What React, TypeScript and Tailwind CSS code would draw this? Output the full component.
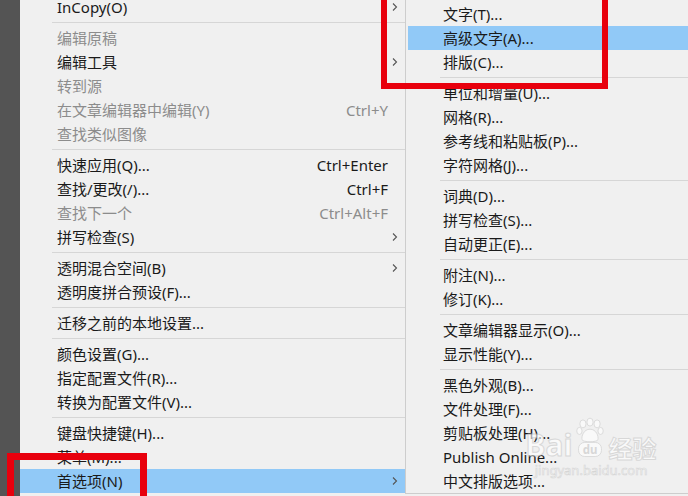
import React from "react";

type Item = { t: string; dis?: boolean; sub?: boolean; sc?: string; hl?: boolean };

const mainSections: Item[][] = [
  [{ t: "InCopy(O)", sub: true }],
  [
    { t: "编辑原稿", dis: true },
    { t: "编辑工具", sub: true },
    { t: "转到源", dis: true },
    { t: "在文章编辑器中编辑(Y)", dis: true, sc: "Ctrl+Y" },
    { t: "查找类似图像", dis: true },
  ],
  [
    { t: "快速应用(Q)...", sc: "Ctrl+Enter" },
    { t: "查找/更改(/)...", sc: "Ctrl+F" },
    { t: "查找下一个", dis: true, sc: "Ctrl+Alt+F" },
    { t: "拼写检查(S)", sub: true },
  ],
  [{ t: "透明混合空间(B)", sub: true }, { t: "透明度拼合预设(F)..." }],
  [{ t: "迁移之前的本地设置..." }],
  [{ t: "颜色设置(G)..." }, { t: "指定配置文件(R)..." }, { t: "转换为配置文件(V)..." }],
  [{ t: "键盘快捷键(H)..." }, { t: "菜单(M)..." }, { t: "首选项(N)", sub: true, hl: true }],
];

const subSections: Item[][] = [
  [{ t: "文字(T)..." }, { t: "高级文字(A)...", hl: true }, { t: "排版(C)..." }],
  [{ t: "单位和增量(U)..." }, { t: "网格(R)..." }, { t: "参考线和粘贴板(P)..." }, { t: "字符网格(J)..." }],
  [{ t: "词典(D)..." }, { t: "拼写检查(S)..." }, { t: "自动更正(E)..." }],
  [{ t: "附注(N)..." }, { t: "修订(K)..." }],
  [{ t: "文章编辑器显示(O)..." }, { t: "显示性能(Y)..." }],
  [
    { t: "黑色外观(B)..." },
    { t: "文件处理(F)..." },
    { t: "剪贴板处理(H)..." },
    { t: "Publish Online..." },
    { t: "中文排版选项..." },
  ],
];

function Chevron() {
  return (
    <svg width="6" height="10" viewBox="0 0 6 10" className="shrink-0">
      <polyline points="1,1.5 4.5,5 1,8.5" fill="none" stroke="#555" strokeWidth="1.1" />
    </svg>
  );
}

function Sep() {
  return (
    <div className="h-[7px] flex items-center pl-[32px]">
      <div className="h-px w-full bg-[#d6d6d6]" />
    </div>
  );
}

function MainRow({ it }: { it: Item }) {
  const color = it.dis ? "text-[#8c8c8c]" : "text-[#1a1a1a]";
  return (
    <div
      className={`h-[24px] flex items-center pl-[37px] pr-[7px] ${it.hl ? "bg-[#91c9f7]" : ""} ${color}`}
    >
      <span className="flex-1 whitespace-nowrap leading-[24px]">{it.t}</span>
      {it.sc && <span className="whitespace-nowrap leading-[24px] mr-[10px]">{it.sc}</span>}
      {it.sub && <Chevron />}
    </div>
  );
}

function SubRow({ it }: { it: Item }) {
  return (
    <div className={`h-[24px] flex items-center pl-[35px] text-[#1a1a1a] ${it.hl ? "bg-[#91c9f7]" : ""}`}>
      <span className="whitespace-nowrap leading-[24px]">{it.t}</span>
    </div>
  );
}

export default function App() {
  return (
    <div
      className="relative w-[688px] h-[496px] overflow-hidden flex bg-[#f0f0f0] text-[15px]"
      style={{ fontFamily: '"Noto Sans", "Noto Sans CJK SC", sans-serif' }}
    >
      <div className="w-[20px] shrink-0 bg-[#545454]" />
      <div className="w-[385px] shrink-0 bg-[#f0f0f0]">
        <div className="mt-[-5px]">
          {mainSections.map((sec, i) => (
            <React.Fragment key={i}>
              {i > 0 && <Sep />}
              {sec.map((it, j) => (
                <MainRow key={j} it={it} />
              ))}
            </React.Fragment>
          ))}
        </div>
      </div>
      <div className="flex-1 flex flex-col">
        <div className="h-[494px] bg-[#f0f0f0] border-l border-b border-[#cdcdcd] pl-[2px] pt-[2px]">
          {subSections.map((sec, i) => (
            <React.Fragment key={i}>
              {i > 0 && <Sep />}
              {sec.map((it, j) => (
                <SubRow key={j} it={it} />
              ))}
            </React.Fragment>
          ))}
        </div>
      </div>

      {/* Baidu watermark */}
      <div className="absolute left-[530px] top-[416px] w-[122px] flex flex-col items-center pointer-events-none opacity-60 whitespace-nowrap">
        <div className="flex items-end gap-[3px]">
          <span className="text-[30px] font-bold leading-none text-white [-webkit-text-stroke:1px_#c8c8c8]">Bai</span>
          <svg width="30" height="44" viewBox="0 0 34 44" className="shrink-0">
            <g fill="#fff" stroke="#c8c8c8" strokeWidth="1">
              <ellipse cx="9" cy="6" rx="3.5" ry="4.5" />
              <ellipse cx="17" cy="4" rx="3.5" ry="4.5" />
              <ellipse cx="25" cy="6" rx="3.5" ry="4.5" />
              <ellipse cx="5" cy="14" rx="3" ry="4" />
              <ellipse cx="29" cy="14" rx="3" ry="4" />
              <path d="M17 12 C10 12 7 20 8 24 C9 27 25 27 26 24 C27 20 24 12 17 12 Z" />
              <rect x="4" y="27" width="26" height="16" rx="7" />
            </g>
            <text x="17" y="40" textAnchor="middle" fontSize="13" fontWeight="bold" fill="#c8c8c8" fontFamily="Noto Sans, sans-serif">du</text>
          </svg>
          <span className="text-[24px] font-bold leading-none text-white whitespace-nowrap [-webkit-text-stroke:1px_#c8c8c8]" style={{ fontFamily: '"Noto Sans CJK SC", sans-serif' }}>经验</span>
        </div>
        <span className="text-[13px] leading-none mt-[4px] text-white [-webkit-text-stroke:0.6px_#c4c4c4]">jingyan.baidu.com</span>
      </div>

      {/* Red annotation boxes */}
      <div className="absolute left-[381px] top-[-10px] w-[227px] h-[99px] border-[6px] border-[#e8000d]" />
      <div className="absolute left-[7px] top-[453px] w-[140px] h-[60px] border-[7px] border-[#e8000d]" />
    </div>
  );
}
